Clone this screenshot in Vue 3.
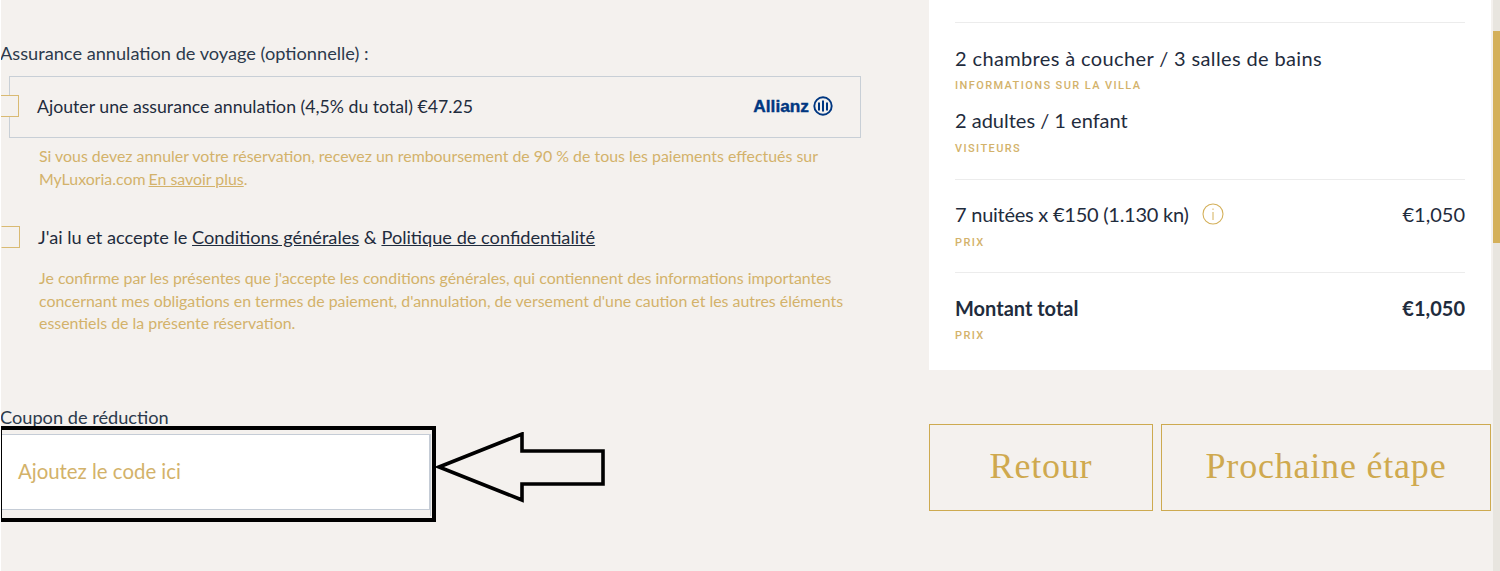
<script setup>
const terms = "Je confirme par les présentes que j'accepte les conditions générales, qui contiennent des informations importantes concernant mes obligations en termes de paiement, d'annulation, de versement d'une caution et les autres éléments essentiels de la présente réservation."
</script>

<template>
  <div class="page">
    <main class="left">
      <p class="section-label">Assurance annulation de voyage (optionnelle) :</p>
      <div class="insurance">
        <span class="check check-out"></span>
        <span class="ins-text">Ajouter une assurance annulation (4,5% du total) €47.25</span>
        <span class="allianz">
          <span class="allianz-word">Allianz</span>
          <svg width="20" height="20" viewBox="0 0 20 20" aria-hidden="true">
            <circle cx="10" cy="10" r="8.7" fill="none" stroke="#003781" stroke-width="1.9" />
            <path d="M5 6.5h2v8H5zM9 4.5h2v11H9zM13 6.5h2v8h-2z" fill="#003781" />
          </svg>
        </span>
      </div>
      <div class="note note-ins">
        <div>Si vous devez annuler votre réservation, recevez un remboursement de 90 % de tous les paiements effectués sur</div>
        <div class="note-line"><span>MyLuxoria.com</span><u>En savoir plus</u><span>.</span></div>
      </div>

      <div class="accept">
        <span class="check check-in"></span>
        <span class="accept-text"><span>J'ai lu et accepte le</span> <u>Conditions générales</u> <span>&amp;</span> <u>Politique de confidentialité</u></span>
      </div>
      <p class="note note-terms">{{ terms }}</p>

      <div class="coupon">
        <label class="coupon-label">Coupon de réduction</label>
        <div class="coupon-wrap">
          <div class="coupon-input">Ajoutez le code ici</div>
        </div>
        <div class="mark-box"></div>
        <svg class="mark-arrow" width="172" height="74" viewBox="0 0 172 74" aria-hidden="true">
          <path d="M3 35 L86 2 V19 H167 V52 H86 V68 Z" fill="none" stroke="#000" stroke-width="3.6" stroke-linejoin="miter" />
        </svg>
      </div>
    </main>

    <aside class="right">
      <section class="card">
        <div class="block block-villa">
          <div class="value wide">2 chambres à coucher / 3 salles de bains</div>
          <div class="caption">INFORMATIONS SUR LA VILLA</div>
          <div class="value value-2">2 adultes / 1 enfant</div>
          <div class="caption">VISITEURS</div>
        </div>
        <div class="block block-price">
          <div class="row">
            <span class="value price-line"><span class="tight">7 nuitées x €150 (1.130 kn)</span>
              <svg class="info" width="22" height="22" viewBox="0 0 22 22" aria-hidden="true">
                <circle cx="11" cy="11" r="10" fill="none" stroke="#d4b05a" stroke-width="1.1" />
                <path d="M11 9v8M11 5.5v1.4" stroke="#d4b05a" stroke-width="1" fill="none" />
              </svg>
            </span>
            <span class="value">€1,050</span>
          </div>
          <div class="caption caption-price">PRIX</div>
        </div>
        <div class="block block-total">
          <div class="row">
            <span class="value strong">Montant total</span>
            <span class="value strong">€1,050</span>
          </div>
          <div class="caption">PRIX</div>
        </div>
      </section>
      <div class="actions">
        <button class="btn btn-back">Retour</button>
        <button class="btn btn-next">Prochaine étape</button>
      </div>
    </aside>

    <div class="scrollbar"><div class="thumb"></div></div>
  </div>
</template>

<style scoped>
.page {
  width: 1500px;
  height: 571px;
  overflow: hidden;
  position: relative;
  display: flex;
  background: #f4f1ee;
  color: #1f2c3d;
  font-family: Lato, "Open Sans", sans-serif;
  border-left: 1px solid #fff;
  box-sizing: border-box;
}
.left {
  width: 928px;
  flex: none;
  padding-top: 43px;
  box-sizing: border-box;
}
.section-label {
  margin: 0 0 0 -1px;
  font-size: 18.2px;
  line-height: 20px;
  color: #2c3a4c;
}
.insurance {
  margin: 13px 0 0 8px;
  width: 852px;
  height: 62px;
  box-sizing: border-box;
  border: 1px solid #c8cfd6;
  display: flex;
  align-items: center;
  position: relative;
  padding: 0 27px 2px 27px;
}
.check {
  height: 22px;
  width: 19px;
  flex: none;
  box-sizing: border-box;
  border: 1px solid #d9ba72;
  border-left: 1px solid #f4f1ee;
  background: #f4f1ee;
}
.check-out {
  position: absolute;
  left: -10px;
  top: 18px;
}
.ins-text {
  font-size: 17.7px;
  flex: 1;
}
.allianz {
  display: flex;
  align-items: center;
  gap: 4px;
  color: #003781;
}
.allianz-word {
  font-family: "Liberation Sans", sans-serif;
  font-weight: 700;
  font-size: 17.3px;
  -webkit-text-stroke: 0.4px #003781;
}
.note {
  margin: 0;
  color: #d3b26a;
  font-size: 15.9px;
  line-height: 22.5px;
  width: 815px;
  margin-left: 38px;
}
.note-line {
  display: flex;
}
.note-line u {
  margin-left: 3px;
}
.note-ins {
  margin-top: 7px;
}
.accept {
  margin-top: 36px;
  height: 22px;
  display: flex;
  align-items: center;
  gap: 18px;
}
.accept-text {
  font-size: 18.2px;
}
.note-terms {
  margin-top: 19px;
}
.coupon {
  position: relative;
  margin-top: 72px;
}
.coupon-label {
  display: block;
  margin-left: -1px;
  font-size: 18.2px;
  line-height: 20px;
  color: #2c3a4c;
}
.coupon-wrap {
  margin-top: 7px;
  width: 430px;
  height: 82px;
  border-right: 1px solid #c8cfd6;
  box-sizing: border-box;
}
.coupon-input {
  height: 76px;
  box-sizing: border-box;
  border: 1px solid #c5ccd6;
  background: #fff;
  color: #d3b26a;
  font-size: 20.4px;
  display: flex;
  align-items: center;
  padding: 0 0 2px 16px;
}
.mark-box {
  position: absolute;
  left: -3px;
  top: 19px;
  width: 438px;
  height: 96px;
  box-sizing: border-box;
  border: 4.5px solid #000;
}
.mark-arrow {
  position: absolute;
  left: 435px;
  top: 25px;
}
.right {
  width: 562px;
  flex: none;
}
.card {
  background: #fff;
  height: 370px;
  box-sizing: border-box;
  padding: 22px 26px 0;
}
.block {
  border-top: 1px solid #ececec;
}
.block-villa {
  height: 157px;
  padding-top: 23px;
  box-sizing: border-box;
}
.block-price {
  height: 93px;
  padding-top: 22px;
  box-sizing: border-box;
}
.block-total {
  padding-top: 23px;
}
.value {
  font-size: 20px;
  line-height: 24px;
  color: #1f2c3d;
}
.wide {
  letter-spacing: 0.37px;
}
.tight {
  letter-spacing: -0.25px;
}
.value-2 {
  margin-top: 15px;
}
.strong {
  font-weight: 700;
}
.caption {
  margin-top: 9px;
  font-family: Roboto, sans-serif;
  font-weight: 500;
  font-size: 11px;
  line-height: 14px;
  letter-spacing: 1.4px;
  color: #d3b26a;
}
.value-2 + .caption {
  margin-top: 10px;
}
.caption-price {
  margin-top: 10px;
}
.row {
  display: flex;
  justify-content: space-between;
  align-items: center;
}
.price-line {
  display: flex;
  align-items: center;
  gap: 13px;
}
.actions {
  margin-top: 54px;
  display: flex;
  gap: 8px;
}
.btn {
  height: 87px;
  box-sizing: border-box;
  background: transparent;
  border: 1px solid #cdaa50;
  color: #cfa94f;
  font-family: "Liberation Serif", serif;
  font-size: 36px;
  letter-spacing: 0.8px;
  padding: 0 0 4px;
}
.btn-back {
  width: 224px;
}
.btn-next {
  width: 330px;
}
.scrollbar {
  position: absolute;
  right: 0;
  top: 0;
  width: 7px;
  height: 100%;
  background: #e8e5df;
}
.thumb {
  margin-top: 31px;
  height: 212px;
  background: #d4b05a;
}
</style>
